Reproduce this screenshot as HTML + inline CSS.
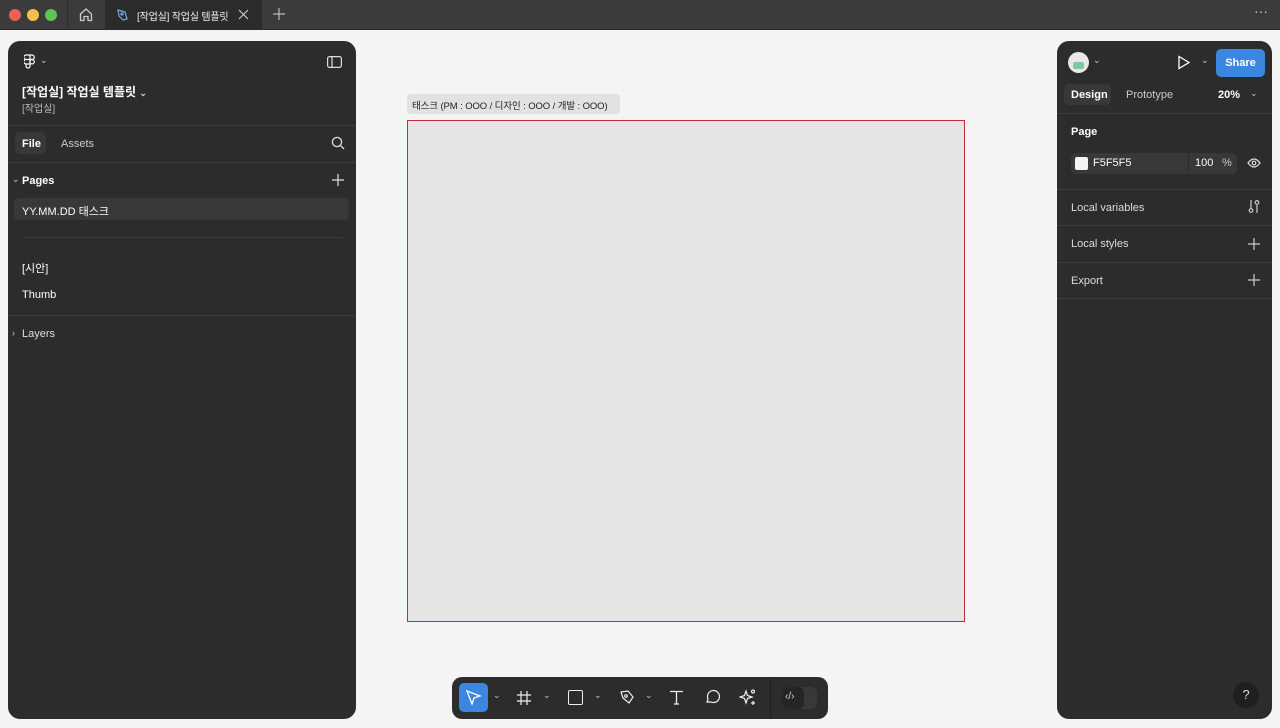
<!DOCTYPE html>
<html><head><meta charset="utf-8"><style>
*{box-sizing:border-box;margin:0;padding:0}
body{width:1280px;height:728px;overflow:hidden;background:#f4f4f4;font-family:"Liberation Sans","Noto Sans CJK KR",sans-serif;font-size:11px;color:#fff;position:relative}
.top{position:absolute;left:0;top:0;width:1280px;height:30px;background:#3b3b3b;border-bottom:1px solid #2a2a2a}
.dot{position:absolute;top:9px;width:12px;height:12px;border-radius:50%}
.panel{position:absolute;background:#2c2c2c;border-radius:12px}
.a{position:absolute;white-space:nowrap}
.sep{position:absolute;height:1px;background:#3d3d3d}
svg{position:absolute}
</style></head><body>
<div class="top">
 <div class="dot" style="left:9px;background:#ec5f57"></div>
 <div class="dot" style="left:27px;background:#f4be4f"></div>
 <div class="dot" style="left:45px;background:#5fc454"></div>
 <div style="position:absolute;left:67px;top:0;width:1px;height:30px;background:#2d2d2d"></div>
 <svg style="left:79px;top:7px" width="14" height="15" viewBox="0 0 14 15" fill="none" stroke="#ccc" stroke-width="1.3"><path d="M1.5 7L7 2l5.5 5v6.5h-3.5v-4h-4v4H1.5z"/></svg>
 <div style="position:absolute;left:105px;top:0;width:157px;height:30px;background:#2b2b2b"></div>
 <svg style="left:116px;top:8px" width="13" height="13" viewBox="0 0 13 13" fill="none" stroke="#7aa7e0" stroke-width="1.2"><path d="M2 2l7 2 2 7-4 1-4-4z"/><circle cx="6" cy="6" r="1"/></svg>
 <div class="a" style="left:137px;top:8px;font-size:10px;color:#eee;letter-spacing:-0.2px">[작업실] 작업실 템플릿</div>
 <svg style="left:238px;top:9px" width="11" height="11" viewBox="0 0 11 11" stroke="#ccc" stroke-width="1.2"><path d="M1 1l9 9M10 1l-9 9"/></svg>
 <svg style="left:273px;top:8px" width="12" height="12" viewBox="0 0 12 12" stroke="#bbb" stroke-width="1.2"><path d="M6 0v12M0 6h12"/></svg>
 <div class="a" style="left:1254px;top:3px;font-size:14px;color:#ccc">···</div>
</div>

<div class="panel" style="left:8px;top:41px;width:348px;height:678px">
 <svg style="left:16px;top:13px" width="12" height="16" viewBox="0 0 12 16" fill="none" stroke="#fff" stroke-width="1.2"><path d="M2 1h4v4.5H2a2.25 2.25 0 010-4.5zM6 1h2a2.25 2.25 0 010 4.5H6zM2 5.5h4V10H2a2.25 2.25 0 010-4.5zM2 10h4v2a2 2 0 01-4 0z"/><circle cx="8" cy="7.75" r="2.2"/></svg>
 <div class="a" style="left:32px;top:14px;font-size:9px;color:#ccc">⌄</div>
 <svg style="left:319px;top:15px" width="15" height="12" viewBox="0 0 15 12" fill="none" stroke="#ddd" stroke-width="1.2"><rect x="0.6" y="0.6" width="13.8" height="10.8" rx="2"/><path d="M5 1v10"/></svg>
 <div class="a" style="left:14px;top:42px;font-size:12px;font-weight:bold">[작업실] 작업실 템플릿 <span style="font-size:9px;color:#ccc">⌄</span></div>
 <div class="a" style="left:14px;top:59px;font-size:10px;color:#bbb">[작업실]</div>
 <div class="sep" style="left:0;top:84px;width:348px"></div>
 <div style="position:absolute;left:7px;top:91px;width:31px;height:22px;background:#383838;border-radius:5px"></div>
 <div class="a" style="left:14px;top:97px;font-weight:bold">File</div>
 <div class="a" style="left:53px;top:97px;color:#ccc">Assets</div>
 <svg style="left:323px;top:95px" width="14" height="14" viewBox="0 0 14 14" fill="none" stroke="#ddd" stroke-width="1.3"><circle cx="6" cy="6" r="4.6"/><path d="M9.4 9.4L13 13"/></svg>
 <div class="sep" style="left:0;top:121px;width:348px"></div>
 <div class="a" style="left:4px;top:133px;font-size:9px;color:#ccc">⌄</div>
 <div class="a" style="left:14px;top:134px;font-weight:bold">Pages</div>
 <svg style="left:324px;top:133px" width="12" height="12" viewBox="0 0 12 12" stroke="#ddd" stroke-width="1.2"><path d="M6 0v12M0 6h12"/></svg>
 <div style="position:absolute;left:6px;top:157px;width:335px;height:22px;background:#383838;border-radius:5px"></div>
 <div class="a" style="left:14px;top:162px">YY.MM.DD 태스크</div>
 <div class="sep" style="left:14px;top:196px;width:320px"></div>
 <div class="a" style="left:14px;top:219px">[시안]</div>
 <div class="a" style="left:14px;top:248px">Thumb</div>
 <div class="sep" style="left:0;top:274px;width:348px"></div>
 <div class="a" style="left:4px;top:287px;font-size:9px;color:#ccc">›</div>
 <div class="a" style="left:14px;top:287px;color:#ddd">Layers</div>
</div>

<div style="position:absolute;left:407px;top:94px;width:213px;height:20px;background:#e2e2e2;border-radius:3px"></div>
<div class="a" style="left:412px;top:98px;font-size:9.5px;color:#222;letter-spacing:-0.1px">태스크 (PM : OOO / 디자인 : OOO / 개발 : OOO)</div>
<div style="position:absolute;left:407px;top:120px;width:558px;height:502px;background:#e5e5e5;border:1px solid #c8283c"></div>

<div class="panel" style="left:1057px;top:41px;width:215px;height:678px">
 <div style="position:absolute;left:11px;top:11px;width:21px;height:21px;border-radius:50%;background:#e8e8e8"><div style="position:absolute;left:5px;top:10px;width:11px;height:7px;background:#7fc6a4;border-radius:2px"></div></div>
 <div class="a" style="left:36px;top:14px;font-size:9px;color:#ccc">⌄</div>
 <svg style="left:120px;top:14px" width="14" height="15" viewBox="0 0 14 15" fill="none" stroke="#fff" stroke-width="1.3"><path d="M2 1.5l10 6-10 6z"/></svg>
 <div class="a" style="left:144px;top:14px;font-size:9px;color:#ccc">⌄</div>
 <div style="position:absolute;left:159px;top:8px;width:49px;height:28px;background:#3a86e0;border-radius:5px;text-align:center;line-height:28px;font-weight:bold">Share</div>
 <div style="position:absolute;left:7px;top:43px;width:47px;height:21px;background:#383838;border-radius:5px"></div>
 <div class="a" style="left:14px;top:48px;font-weight:bold">Design</div>
 <div class="a" style="left:69px;top:48px;color:#ccc">Prototype</div>
 <div class="a" style="left:161px;top:48px;font-weight:bold">20%</div>
 <div class="a" style="left:193px;top:47px;font-size:9px;color:#ccc">⌄</div>
 <div class="sep" style="left:0;top:72px;width:215px"></div>
 <div class="a" style="left:14px;top:85px;font-weight:bold">Page</div>
 <div style="position:absolute;left:14px;top:112px;width:166px;height:21px;background:#383838;border-radius:5px"></div>
 <div style="position:absolute;left:18px;top:116px;width:13px;height:13px;background:#f5f5f5;border-radius:2px"></div>
 <div class="a" style="left:36px;top:116px">F5F5F5</div>
 <div style="position:absolute;left:131px;top:112px;width:1px;height:21px;background:#2c2c2c"></div>
 <div class="a" style="left:138px;top:116px">100</div>
 <div class="a" style="left:165px;top:116px;color:#ccc">%</div>
 <svg style="left:190px;top:117px" width="14" height="10" viewBox="0 0 14 10" fill="none" stroke="#ddd" stroke-width="1.2"><path d="M1 5q6-8 12 0q-6 8-12 0z"/><circle cx="7" cy="5" r="1.8"/></svg>
 <div class="sep" style="left:0;top:148px;width:215px"></div>
 <div class="a" style="left:14px;top:161px;color:#ddd">Local variables</div>
 <svg style="left:191px;top:158px" width="12" height="15" viewBox="0 0 12 15" fill="none" stroke="#ddd" stroke-width="1.1"><path d="M3 1v8M9 6v8"/><circle cx="3" cy="11.5" r="1.8"/><circle cx="9" cy="3.5" r="1.8"/></svg>
 <div class="sep" style="left:0;top:184px;width:215px"></div>
 <div class="a" style="left:14px;top:197px;color:#ddd">Local styles</div>
 <svg style="left:191px;top:197px" width="12" height="12" viewBox="0 0 12 12" stroke="#ccc" stroke-width="1.2"><path d="M6 0v12M0 6h12"/></svg>
 <div class="sep" style="left:0;top:221px;width:215px"></div>
 <div class="a" style="left:14px;top:234px;color:#ddd">Export</div>
 <svg style="left:191px;top:233px" width="12" height="12" viewBox="0 0 12 12" stroke="#ccc" stroke-width="1.2"><path d="M6 0v12M0 6h12"/></svg>
 <div class="sep" style="left:0;top:257px;width:215px"></div>
 <div style="position:absolute;left:176px;top:641px;width:26px;height:26px;border-radius:50%;background:#1f1f1f;text-align:center;line-height:26px;font-size:13px;color:#ddd">?</div>
</div>

<div style="position:absolute;left:452px;top:677px;width:376px;height:42px;background:#2c2c2c;border-radius:10px"></div>
<div style="position:absolute;left:459px;top:683px;width:29px;height:29px;background:#3a86e0;border-radius:5px"></div>
<svg style="left:465px;top:689px" width="17" height="17" viewBox="0 0 17 17" fill="none" stroke="#fff" stroke-width="1.3"><path d="M2 2l13 5-6 2-2 6z"/></svg>
<div class="a" style="left:493px;top:690px;font-size:9px;color:#ccc">⌄</div>
<svg style="left:516px;top:690px" width="16" height="16" viewBox="0 0 16 16" stroke="#eee" stroke-width="1.2"><path d="M5 1v14M11 1v14M1 5h14M1 11h14"/></svg>
<div class="a" style="left:543px;top:690px;font-size:9px;color:#ccc">⌄</div>
<div style="position:absolute;left:568px;top:690px;width:15px;height:15px;border:1.3px solid #eee;border-radius:2px"></div>
<div class="a" style="left:594px;top:690px;font-size:9px;color:#ccc">⌄</div>
<svg style="left:619px;top:689px" width="16" height="16" viewBox="0 0 16 16" fill="none" stroke="#eee" stroke-width="1.2"><path d="M2 3l7-1 5 6-4 6-6-5z"/><circle cx="7" cy="7" r="1.3"/></svg>
<div class="a" style="left:645px;top:690px;font-size:9px;color:#ccc">⌄</div>
<svg style="left:669px;top:690px" width="15" height="15" viewBox="0 0 15 15" fill="none" stroke="#eee" stroke-width="1.3"><path d="M1 1.5h13M7.5 1.5V14M5 14h5"/></svg>
<svg style="left:704px;top:689px" width="16" height="16" viewBox="0 0 16 16" fill="none" stroke="#eee" stroke-width="1.2"><path d="M3 13l1-3a6 6 0 113 3z"/></svg>
<svg style="left:739px;top:688px" width="18" height="18" viewBox="0 0 18 18" fill="none" stroke="#eee" stroke-width="1.2"><path d="M7 3l1.5 4.5L13 9l-4.5 1.5L7 15l-1.5-4.5L1 9l4.5-1.5z"/><circle cx="14" cy="3.5" r="1.5"/><path d="M14 13v4M12 15h4"/></svg>
<div style="position:absolute;left:770px;top:677px;width:1px;height:42px;background:#1f1f1f"></div>
<div style="position:absolute;left:782px;top:687px;width:35px;height:22px;background:#383838;border-radius:6px"></div>
<div style="position:absolute;left:782px;top:687px;width:22px;height:22px;background:#252525;border-radius:6px"></div>
<div class="a" style="left:785px;top:691px;font-size:10px;color:#ddd">‹/›</div>
</body></html>
